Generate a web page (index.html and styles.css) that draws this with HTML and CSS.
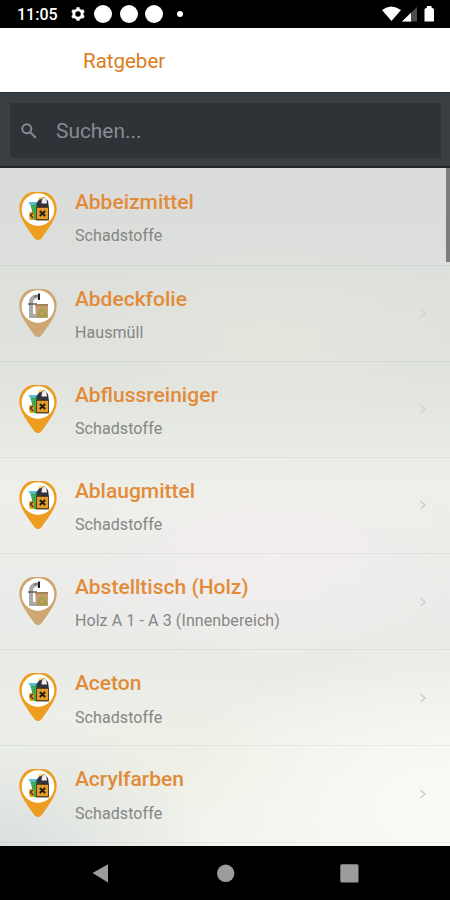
FILE: index.html
```html
<!DOCTYPE html>
<html lang="de">
<head>
<meta charset="utf-8">
<title>Ratgeber</title>
<link rel="stylesheet" href="styles.css">
</head>
<body>
<svg class="defs" width="0" height="0">
  <symbol id="pin" viewBox="0 0 38 49">
    <path d="M10 .8Q19-1.4 28 .8C34 3.5 37.7 10 37.7 17c0 10-9.5 21-15.4 29.4q-3.3 3.4-6.6 0C9.8 38 .3 27 .3 17 .3 10 4 3.5 10 .8Z" fill="currentColor"/>
    <circle cx="19" cy="17.5" r="16.300" fill="#fff"/>
  </symbol>
  <symbol id="toxic" viewBox="0 0 38 49">
    <use href="#pin"/>
    <path d="M11 11h8v17h-7l1-9z" fill="#3fa950"/>
    <path d="M9.500 10h8.500l-2 3h-5z" fill="#55bdd8"/>
    <path d="M10.500 20h4.500v8h-4l-1-3z" fill="#e9981c"/>
    <path d="M14 21l-2.500 2 2.500 3" fill="none" stroke="#3a3a20" stroke-width="1.400"/>
    <path d="M17.500 15v-4l3-4 4.500-2 4 4 1 7H17.500z" fill="#303338"/>
    <path d="M19 6.500q3-3 6-1l-4 2z" fill="#f3d95c"/>
    <path d="M22.500 11.500q0-5 2.500-6 3 1 3 6z" fill="#f1eeef"/>
    <path d="M17 15h13v13.500H17z" fill="#5c431f"/>
    <path d="M18 16h11v11H18z" fill="#e69a28"/>
    <path d="M20.800 19l5.400 5m0-5l-5.400 5" stroke="#201e18" stroke-width="1.900"/>
  </symbol>
  <symbol id="bin" viewBox="0 0 38 49">
    <use href="#pin"/>
    <path d="M19 7.500h-2q-5 1-5 6.500v13h5" fill="none" stroke="#a7a8a9" stroke-width="4"/>
    <path d="M9 15h9" stroke="#55595e" stroke-width="1.400"/>
    <path d="M15 7.500l5-1" stroke="#6d7074" stroke-width="1.400"/>
    <path d="M20 4.500v6.500" stroke="#20252b" stroke-width="2"/>
    <path d="M16 15h13v14H17z" fill="#c69d69"/>
    <path d="M16 15h13v2H16z" fill="#a5825f"/>
    <path d="M19 27l3-6h2l3 6z" fill="none" stroke="#98a04a" stroke-width="1.800"/>
  </symbol>
  <symbol id="next" viewBox="0 0 8 12">
    <path d="M1.500 2l4.500 4-4.500 4" fill="none" stroke="currentColor" stroke-width="1.400"/>
  </symbol>
</svg>
<div class="phone">
  <header class="status">
    <span class="clock">11:05</span>
    <svg class="gear" viewBox="0 0 20 20"><g fill="none" stroke="#fff"><circle cx="10" cy="10" r="5.200" stroke-width="3.600"/><path d="M10 1.500v3M10 15.500v3M2.600 5.750l2.600 1.500M14.800 12.750l2.600 1.500M2.600 14.250l2.600-1.500M14.800 7.250l2.600-1.500" stroke-width="4"/></g></svg>
    <i class="dot"></i><i class="dot"></i><i class="dot"></i><i class="dot small"></i>
    <svg class="signals" viewBox="0 0 54 18">
      <path d="M0 5Q9-2 19 5L9.500 16z" fill="#fff"/>
      <path d="M20 16.500L35 2v14.500z" fill="#4e4e4e"/>
      <path d="M20 16.500L29 7.800v8.700z" fill="#fff"/>
      <path d="M42.500 4L45 2.500V1h4.500v1.500L52 4v12.500h-9.500z" fill="#fff"/>
    </svg>
  </header>
  <div class="titlebar"><h1>Ratgeber</h1></div>
  <div class="searchbar">
    <div class="field">
      <svg class="lens" viewBox="0 0 16 16"><circle cx="5.800" cy="5.800" r="4.500"/><path d="M9.200 9.200l5.600 5.600"/></svg>
      <span>Suchen...</span>
    </div>
  </div>
  <main class="list">
    <div class="row"><svg class="icon orange"><use href="#toxic"/></svg><div class="text"><h2>Abbeizmittel</h2><p>Schadstoffe</p></div><svg class="next faint"><use href="#next"/></svg></div>
    <div class="row"><svg class="icon tan"><use href="#bin"/></svg><div class="text"><h2>Abdeckfolie</h2><p>Hausmüll</p></div><svg class="next light"><use href="#next"/></svg></div>
    <div class="row"><svg class="icon orange"><use href="#toxic"/></svg><div class="text"><h2>Abflussreiniger</h2><p>Schadstoffe</p></div><svg class="next light"><use href="#next"/></svg></div>
    <div class="row"><svg class="icon orange"><use href="#toxic"/></svg><div class="text"><h2>Ablaugmittel</h2><p>Schadstoffe</p></div><svg class="next"><use href="#next"/></svg></div>
    <div class="row"><svg class="icon tan"><use href="#bin"/></svg><div class="text"><h2>Abstelltisch (Holz)</h2><p>Holz A 1 - A 3 (Innenbereich)</p></div><svg class="next"><use href="#next"/></svg></div>
    <div class="row"><svg class="icon orange"><use href="#toxic"/></svg><div class="text"><h2>Aceton</h2><p>Schadstoffe</p></div><svg class="next"><use href="#next"/></svg></div>
    <div class="row"><svg class="icon orange"><use href="#toxic"/></svg><div class="text"><h2>Acrylfarben</h2><p>Schadstoffe</p></div><svg class="next"><use href="#next"/></svg></div>
    <div class="scroll"></div>
  </main>
  <nav class="nav">
    <svg viewBox="0 0 450 54">
      <path d="M92.500 27L108 18.300v18.200z"/>
      <circle cx="225.700" cy="27.300" r="8.700"/>
      <rect x="340.300" y="18.300" width="18.200" height="18.200" rx="1.500"/>
    </svg>
  </nav>
</div>
</body>
</html>
```
FILE: styles.css
```css
* { box-sizing: border-box; }
body { margin: 0; font-family: Roboto, sans-serif; }
h1, h2, p { margin: 0; }
.defs { display: block; }
.phone { width: 450px; height: 900px; display: flex; flex-direction: column; overflow: hidden; background: #000; }

.status { height: 27.500px; flex: none; display: flex; align-items: center; padding: 1px 14px 0 17px; background: #000; }
.clock { width: 53px; color: #fff; font-size: 16px; font-weight: 500; letter-spacing: 0; padding-top: 1px; }
.gear { width: 16px; height: 16px; margin-right: 8px; }
.dot { width: 18px; height: 18px; margin-right: 7.500px; border-radius: 50%; background: #fff; }
.dot.small { width: 6px; height: 6px; margin-left: 6px; }
.signals { width: 54px; height: 18px; margin-left: auto; }

.titlebar { height: 64.500px; flex: none; display: flex; align-items: center; padding-left: 83px; background: #fff; }
h1 { color: #dc7c1c; font-size: 20.500px; font-weight: 400; line-height: 24px; padding-top: 2px; }

.searchbar { height: 76px; flex: none; padding: 10px 9px 9px 10px; background: #3a3f43; border-top: 1px solid #2b2e31; border-bottom: 2px solid #24282a; }
.field { height: 55px; display: flex; align-items: center; padding: 0 0 0 11px; border-radius: 2px; background: #2f3337; color: #858b93; font-size: 20.900px; }
.lens { width: 16px; height: 16px; margin-right: 19px; fill: none; stroke: #858b93; stroke-width: 2; }

.list {
  position: relative; flex: 1; overflow: hidden;
  background:
    radial-gradient(ellipse 190px 110px at 270px 395px, rgba(245,238,241,.7), rgba(245,238,241,0)),
    radial-gradient(ellipse 200px 90px at 270px 170px, rgba(232,234,221,.5), rgba(232,234,221,0)),
    radial-gradient(ellipse 280px 170px at 450px 640px, #fcfaf5, rgba(252,250,245,0)),
    radial-gradient(ellipse 210px 150px at 0 690px, #d9dedb, rgba(217,222,219,0)),
    radial-gradient(ellipse 190px 90px at 180px 590px, rgba(235,239,224,.6), rgba(235,239,224,0)),
    linear-gradient(#dadbda 0, #dddfdc 90px, #dfe2dd 190px, #e5e7e1 250px, #eeefe9 320px, #ececea 400px, #e9ebe7 500px, #f1f2ed 590px, #f2f3ee 678px);
}
.row { height: 96.200px; display: flex; align-items: flex-start; padding: 23px 23px 0 18.600px; border-bottom: 1px solid rgba(70,85,80,.08); }
.row:first-child { height: 97.500px; padding-top: 24px; }
.icon { width: 38px; height: 49px; flex: none; margin-right: 18.300px; }
.orange { color: #ed9d20; }
.tan { color: #cda672; }
.text { flex: 1; }
h2 { color: #e28b38; font-size: 21px; font-weight: 500; line-height: 24px; margin-top: -2px; }
p { color: #858684; font-size: 16px; line-height: 20px; margin-top: 12.300px; letter-spacing: .1px; }
.next { width: 8px; height: 12px; margin-top: 18.500px; color: #cbccca; }
.light { color: #cfd2ce; }
.faint { color: #d6d8d6; }
.scroll { position: absolute; top: 0; right: 0; width: 4px; height: 94px; background: #7b7c7b; }

.nav { height: 54px; flex: none; background: #000; }
.nav svg { display: block; width: 450px; height: 54px; fill: #9c9c9c; }
```
